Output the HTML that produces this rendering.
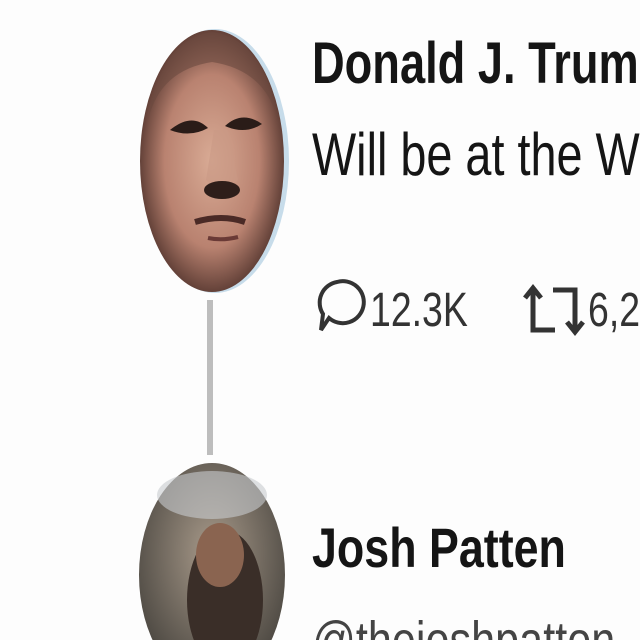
<!DOCTYPE html>
<html><head><style>
body{margin:0;width:640px;height:640px;overflow:hidden;background:#fdfdfd;font-family:"Liberation Sans",sans-serif;position:relative}
#w{position:absolute;left:0;top:0;width:640px;height:640px;overflow:hidden}
.t{position:absolute;white-space:nowrap;transform-origin:0 0;color:#151515}
</style></head><body><div id="w">
<svg width="640" height="640" style="position:absolute;left:0;top:0">
<defs>
<radialGradient id="f" cx="50%" cy="50%" r="55%">
<stop offset="0" stop-color="#d9ab95"/><stop offset="0.6" stop-color="#b98270"/><stop offset="1" stop-color="#4a2e28"/></radialGradient>
<radialGradient id="g" cx="50%" cy="40%" r="60%">
<stop offset="0" stop-color="#a89a8a"/><stop offset="1" stop-color="#4a4640"/></radialGradient>
</defs>
<ellipse cx="215" cy="161" rx="74" ry="132" fill="#c7dcea"/>
<ellipse cx="212" cy="161" rx="72" ry="131" fill="url(#f)"/>
<path d="M148 120 Q160 40 212 32 Q265 40 278 120 Q265 70 212 62 Q160 70 148 120Z" fill="#6a4a40" opacity="0.6"/>
<path d="M170 130 Q192 112 208 128 Q190 138 170 130Z" fill="#2a1c18"/>
<path d="M225 126 Q242 110 262 124 Q245 135 225 126Z" fill="#2a1c18"/>
<path d="M214 130 L206 180 Q222 196 238 180 L228 130Z" fill="#c99a85" opacity="0.6"/>
<ellipse cx="222" cy="190" rx="18" ry="9" fill="#2e1e1a"/>
<path d="M195 222 Q222 214 245 222" stroke="#4a2a26" stroke-width="6" fill="none"/>
<path d="M208 238 Q222 241 238 237" stroke="#6a3a36" stroke-width="4" fill="none"/>
<rect x="207" y="300" width="6" height="155" fill="#bdbdbd"/>
<ellipse cx="212" cy="575" rx="73" ry="112" fill="url(#g)"/>
<ellipse cx="225" cy="600" rx="38" ry="70" fill="#3a2e28"/>
<ellipse cx="220" cy="555" rx="24" ry="32" fill="#8a6450"/>
<ellipse cx="212" cy="495" rx="55" ry="24" fill="#c8ccce" opacity="0.6"/>
<path d="M337 282 a21 21 0 1 1 -8 36 l-8 12 l2 -16 a21 21 0 0 1 14 -32Z" fill="none" stroke="#333" stroke-width="4"/>
<path d="M533 290 v40 h22 M525 298 l8 -10 l8 10 M575 330 v-40 h-22 M567 322 l8 10 l8 -10" fill="none" stroke="#333" stroke-width="5"/>
</svg>
<div class="t" style="left:312px;top:30px;font-size:58px;font-weight:bold;transform:scaleX(0.78)">Donald J. Trump</div>
<div class="t" style="left:312px;top:120px;font-size:60px;transform:scaleX(0.78)">Will be at the Wo</div>
<div class="t" style="left:370px;top:283px;font-size:48px;color:#333;transform:scaleX(0.78)">12.3K</div>
<div class="t" style="left:588px;top:283px;font-size:48px;color:#333;transform:scaleX(0.78)">6,2</div>
<div class="t" style="left:312px;top:515px;font-size:56px;font-weight:bold;transform:scaleX(0.8)">Josh Patten</div>
<div class="t" style="left:312px;top:610px;font-size:54px;color:#444;transform:scaleX(0.8)">@thejoshpatton</div>
</div></body></html>
